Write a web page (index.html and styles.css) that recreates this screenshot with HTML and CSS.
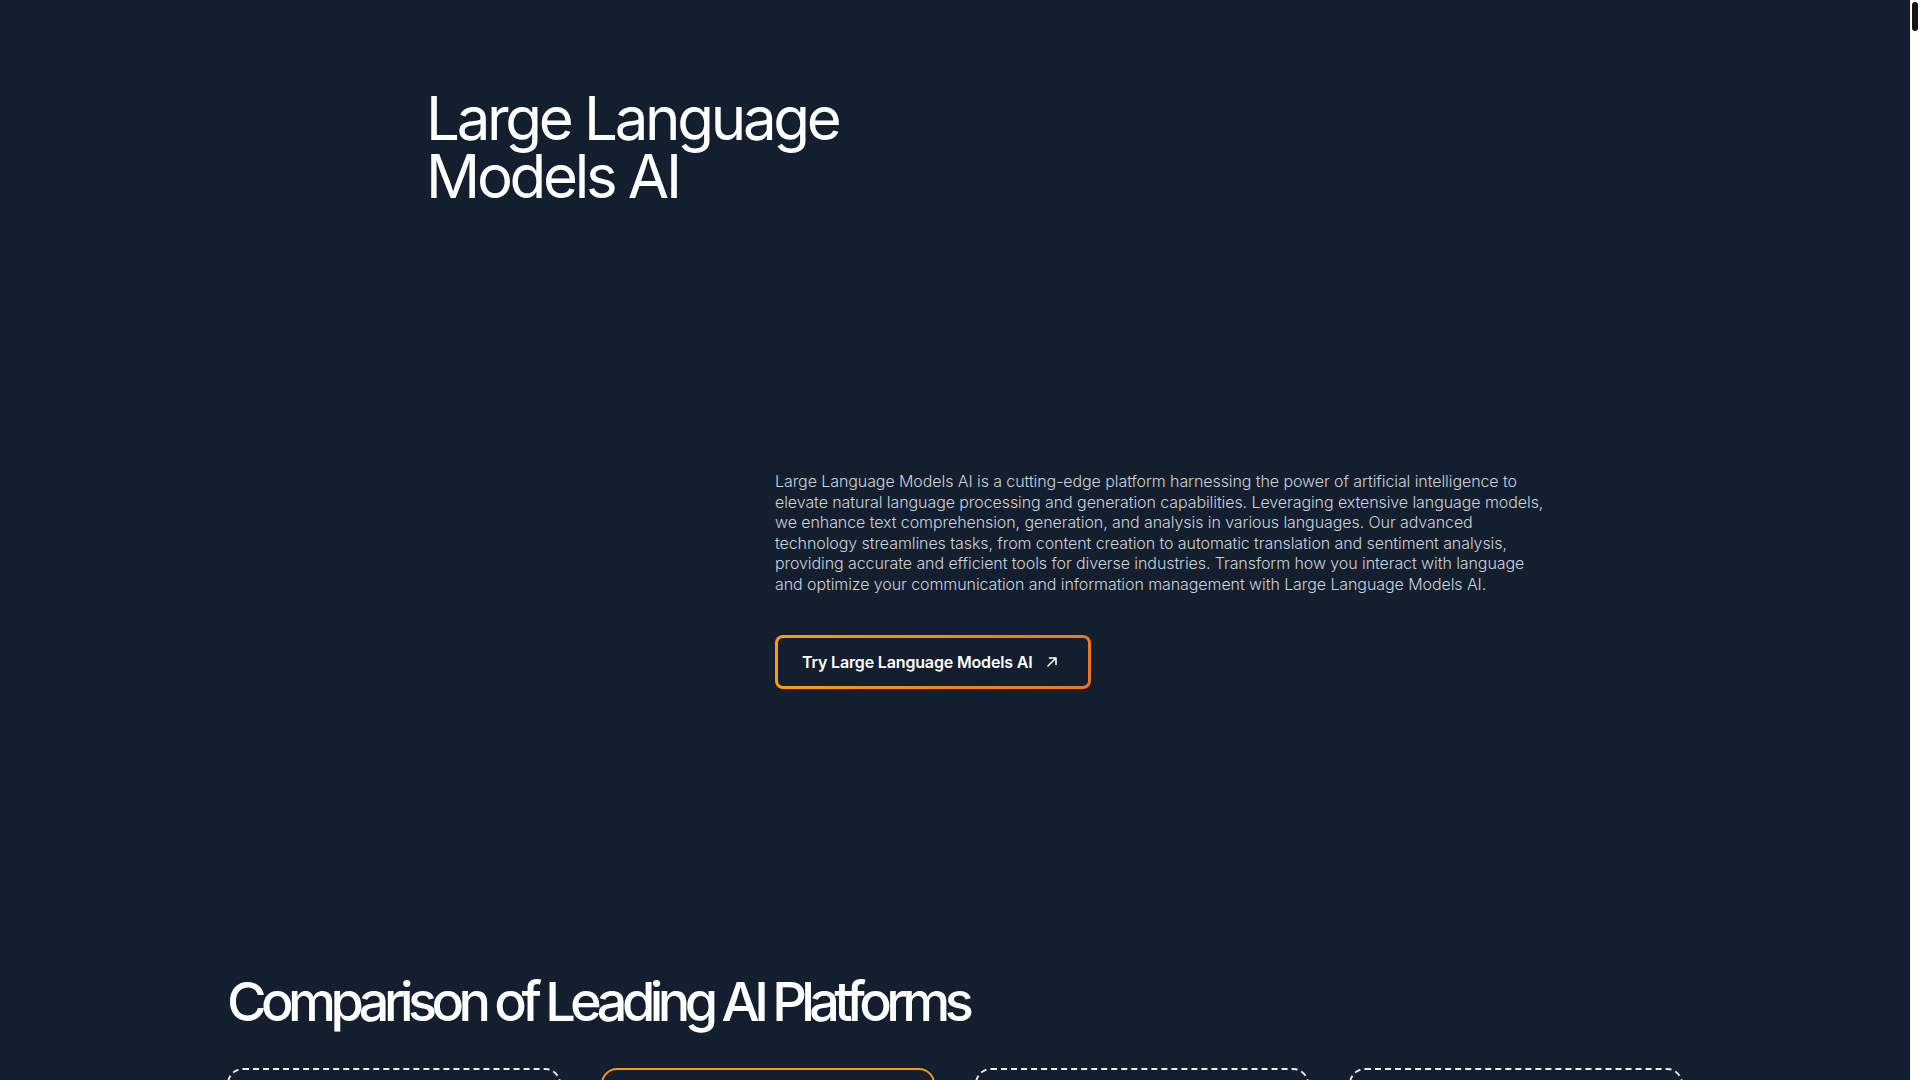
FILE: index.html
```html
<!DOCTYPE html>
<html lang="en">
<head>
<meta charset="utf-8">
<title>Large Language Models AI</title>
<link rel="stylesheet" href="styles.css">
</head>
<body>
<main class="page">
  <section class="hero">
    <div class="hero-inner">
      <h1 class="hero-title">Large Language<br>Models AI</h1>
      <div class="hero-body">
        <p class="hero-text">Large Language Models AI is a cutting-edge platform harnessing the power of artificial intelligence to elevate natural language processing and generation capabilities. Leveraging extensive language models, we enhance text comprehension, generation, and analysis in various languages. Our advanced technology streamlines tasks, from content creation to automatic translation and sentiment analysis, providing accurate and efficient tools for diverse industries. Transform how you interact with language and optimize your communication and information management with Large Language Models AI.</p>
        <a class="cta" href="#">
          <span>Try Large Language Models AI</span>
          <svg class="cta-icon" viewBox="0 0 12 12" width="12" height="12" aria-hidden="true"><path d="M2 10 L10 2 M3.5 2 H10 V8.5" fill="none" stroke="currentColor" stroke-width="1.6" stroke-linecap="round" stroke-linejoin="round"/></svg>
        </a>
      </div>
    </div>
  </section>

  <section class="compare">
    <h2 class="compare-title">Comparison of Leading AI Platforms</h2>
    <div class="cards">
      <article class="card">
        <h3 class="card-title">ChatGPT</h3>
        <p class="card-text">Conversational assistant for writing, coding and research.</p>
      </article>
      <article class="card card-featured">
        <h3 class="card-title">Large Language Models AI</h3>
        <p class="card-text">Text comprehension, generation and analysis in many languages.</p>
      </article>
      <article class="card">
        <h3 class="card-title">Gemini</h3>
        <p class="card-text">Multimodal model family for text, images and code.</p>
      </article>
      <article class="card">
        <h3 class="card-title">Claude</h3>
        <p class="card-text">Assistant focused on long documents and careful reasoning.</p>
      </article>
    </div>
  </section>
</main>
<div class="scrollbar" aria-hidden="true"><div class="scrollbar-thumb"></div></div>
</body>
</html>
```

FILE: styles.css
```css
* { box-sizing: border-box; }

html { background: #131e2f; }

body {
  margin: 0;
  display: flex;
  align-items: flex-start;
  background: #131e2f;
  color: #ffffff;
  font-family: Inter, "Noto Sans", sans-serif;
}

.page { flex: 1; min-width: 0; min-height: 38000px; }

.scrollbar {
  flex: 0 0 10px;
  align-self: stretch;
  background: #ffffff;
  padding: 2px;
}

.scrollbar-thumb {
  height: 29px;
  border-radius: 3px;
  background: #151515;
}

.hero { padding-top: 89px; height: 962px; }

.hero-inner {
  max-width: 1058px;
  margin: 0 auto;
}

.hero-title {
  margin: 0;
  font-size: 60px;
  line-height: 58px;
  font-weight: 400;
  letter-spacing: -0.055em;
}

.hero-body {
  margin-left: 349px;
  margin-top: 266px;
  width: 772px;
}

.hero-text {
  margin: 0;
  font-size: 16px;
  line-height: 20.6px;
  font-weight: 300;
  color: #cdd1d8;
  letter-spacing: -0.005em;
}

.cta {
  margin-top: 40px;
  display: inline-flex;
  align-items: center;
  gap: 13px;
  height: 54px;
  padding: 0 30px 0 24px;
  border-radius: 8px;
  border: 3px solid transparent;
  background:
    linear-gradient(#131e2f, #131e2f) padding-box,
    linear-gradient(90deg, #ff9c00, #ec761a) border-box;
  color: #ffffff;
  text-decoration: none;
  font-size: 16px;
  font-weight: 600;
  letter-spacing: -0.01em;
}

.cta-icon { display: block; }

.compare {
  max-width: 1536px;
  margin: 0 auto;
  padding: 0 40px;
}

.compare-title {
  margin: 8px 0 0;
  font-size: 54px;
  line-height: 64px;
  font-weight: 500;
  letter-spacing: -0.103em;
}

.cards {
  margin-top: 34px;
  display: grid;
  grid-template-columns: repeat(4, 1fr);
  gap: 40px;
}

.card {
  min-height: 420px;
  border: 2px dashed rgba(255, 255, 255, 0.92);
  border-radius: 16px;
  padding: 32px;
}

.card-featured { border: 2px solid #ff9800; }

.card-title { margin: 0 0 12px; font-size: 24px; font-weight: 600; }

.card-text { margin: 0; color: #cdd1d8; font-size: 16px; line-height: 1.5; }
```
